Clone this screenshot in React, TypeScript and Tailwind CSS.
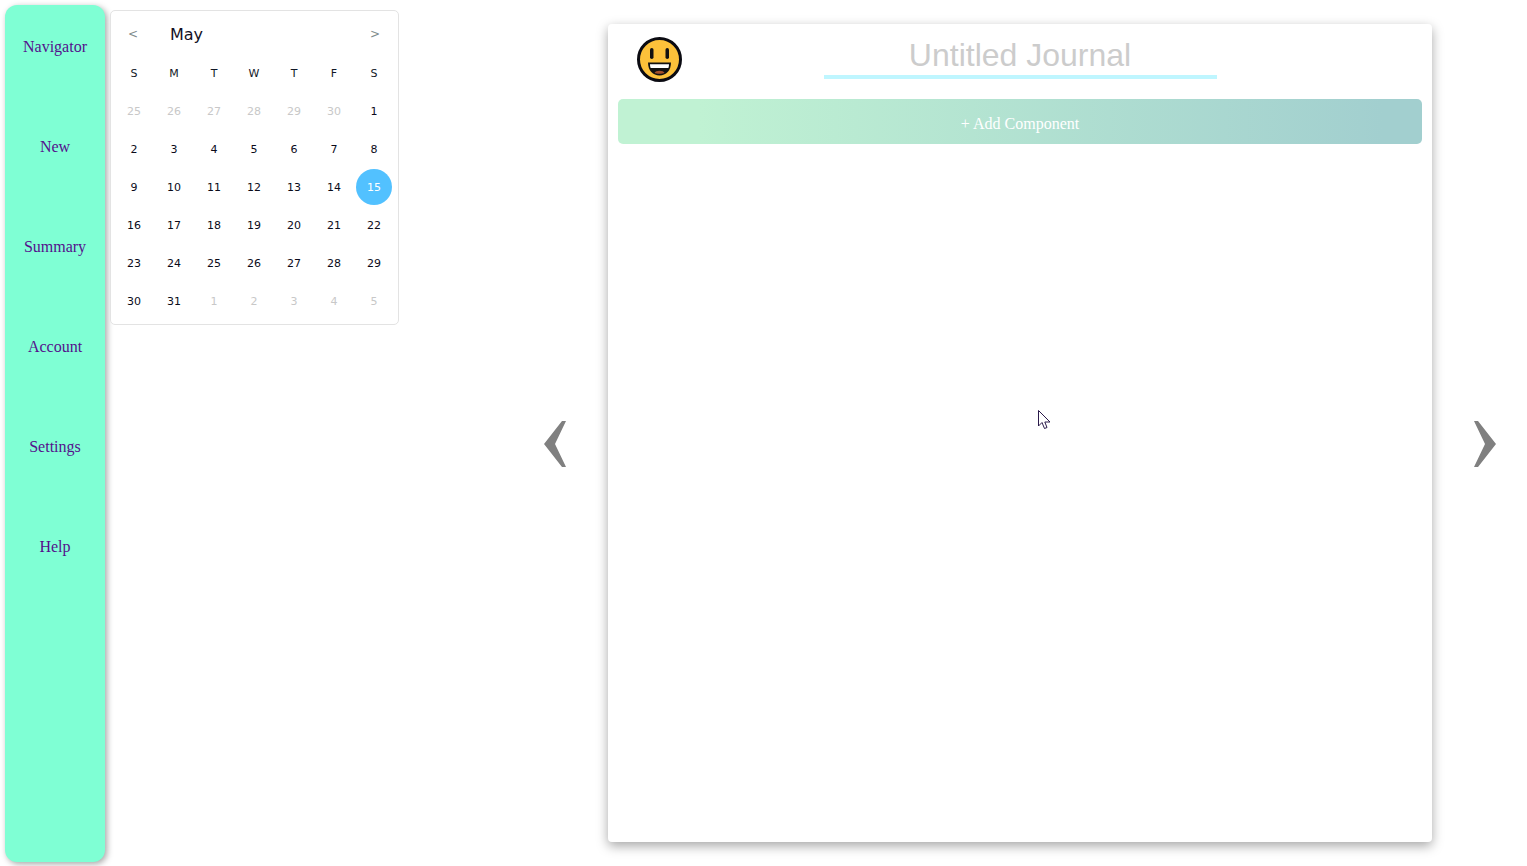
const navItems = ["Navigator", "New", "Summary", "Account", "Settings", "Help"];
const weekDays = ["S", "M", "T", "W", "T", "F", "S"];

const days: { label: number; muted?: boolean; selected?: boolean }[] = [
  ...[25, 26, 27, 28, 29, 30].map((d) => ({ label: d, muted: true })),
  ...Array.from({ length: 31 }, (_, i) => ({ label: i + 1, selected: i + 1 === 15 })),
  ...[1, 2, 3, 4, 5].map((d) => ({ label: d, muted: true })),
];

function Smiley() {
  return (
    <svg width="45" height="45" viewBox="0 0 45 45">
      <circle cx="22.5" cy="22.5" r="21" fill="#fcc13a" stroke="#0b0b12" strokeWidth="3" />
      <rect x="13" y="11" width="3.5" height="11" rx="1.75" fill="#111" />
      <rect x="28.5" y="11" width="3.5" height="11" rx="1.75" fill="#111" />
      <path d="M11 25.5 H34 C34 33.5 29 38.5 22.5 38.5 C16 38.5 11 33.5 11 25.5 Z" fill="#111" />
      <path d="M13 27.2 H32 C32 28.5 31.8 30 31.3 31 H13.7 C13.2 30 13 28.5 13 27.2 Z" fill="#fff" />
      <path d="M17.5 36 C18.5 33 26.5 33 27.5 36 C25.5 37 19.5 37 17.5 36 Z" fill="#a4502a" />
    </svg>
  );
}

function Arrow({ direction }: { direction: "left" | "right" }) {
  const points =
    direction === "left"
      ? "18,0 22,0 11,23 22,46 18,46 0,23"
      : "4,0 0,0 11,23 0,46 4,46 22,23";
  return (
    <svg width="22" height="46" viewBox="0 0 22 46" className="mt-[421px] shrink-0">
      <polygon points={points} fill="#808080" />
    </svg>
  );
}

function Calendar() {
  return (
    <div className="mt-[10px] ml-[5px] h-[315px] w-[289px] shrink-0 rounded-[5px] border border-[#e3e3e3] bg-white pl-[3px] pr-[5px] font-['DejaVu_Sans',sans-serif]">
      <div className="flex h-[43px] items-center justify-between pt-[2px] pl-[14px] pr-[13px]">
        <div className="flex items-center">
          <span className="w-[42px] text-[12px] text-[#7f8c8d]">&lt;</span>
          <span className="pt-[2px] text-[16px] text-[#14101f]">May</span>
        </div>
        <span className="text-[12px] text-[#7f8c8d]">&gt;</span>
      </div>
      <div className="grid grid-cols-[repeat(7,40px)] auto-rows-[38px] text-[11px]">
        {weekDays.map((d, i) => (
          <div key={i} className="flex items-center justify-center pt-[2px] text-[#111827]">
            {d}
          </div>
        ))}
        {days.map((d, i) => (
          <div key={i} className="flex items-center justify-center">
            {d.selected ? (
              <span className="flex h-9 w-9 items-center justify-center rounded-full bg-[#52c1ff] pt-[2px] text-white">
                {d.label}
              </span>
            ) : (
              <span className={d.muted ? "pt-[2px] text-[#c8c8c8]" : "pt-[2px] text-[#0b0b1a]"}>{d.label}</span>
            )}
          </div>
        ))}
      </div>
    </div>
  );
}

export default function App() {
  return (
    <div className="flex h-[866px] w-[1527px] overflow-hidden bg-white">
      {/* Sidebar */}
      <nav className="mt-[5px] ml-[5px] flex h-[857px] w-[100px] shrink-0 flex-col items-center gap-[76px] rounded-[12px] bg-[#7fffd4] pt-[30px] font-['Liberation_Serif',serif] text-[16px] text-[#54108c] shadow-[2px_2px_6px_rgba(0,0,0,0.35)]">
        {navItems.map((item) => (
          <div key={item} className="flex h-6 items-center">
            {item}
          </div>
        ))}
      </nav>

      <Calendar />

      <div className="ml-[145px] flex items-start">
        <Arrow direction="left" />

        {/* Journal page */}
        <div className="relative mt-[24px] ml-[42px] mr-[42px] h-[818px] w-[824px] shrink-0 rounded-[4px] bg-white px-[10px] shadow-[0_4px_12px_rgba(0,0,0,0.35)]">
          <div className="relative flex h-[75px] justify-center">
            <div className="absolute top-[13px] left-[19px]">
              <Smiley />
            </div>
            <div className="mt-[11px] h-[44px] w-[393px] border-b-4 border-[#bff6ff] text-center font-['Liberation_Sans',sans-serif] text-[32px] leading-[40px] text-[#cccccc]">
              Untitled Journal
            </div>
          </div>
          <div className="flex h-[45px] items-center justify-center rounded-[5px] bg-[linear-gradient(90deg,#c0f2d3_10%,#a2cfcf_95%)] pt-[5px] font-['Liberation_Serif',serif] text-[16px] text-white">
            + Add Component
          </div>
          <svg width="13" height="20" viewBox="0 0 13 20" className="absolute top-[386px] left-[430px]">
            <path d="M0.5 0.5 V16 L4 12.5 L6.5 18.5 L9 17.5 L6.8 12 H12 Z" fill="#fff" stroke="#2a1a4a" strokeWidth="1" />
          </svg>
        </div>

        <Arrow direction="right" />
      </div>
    </div>
  );
}
